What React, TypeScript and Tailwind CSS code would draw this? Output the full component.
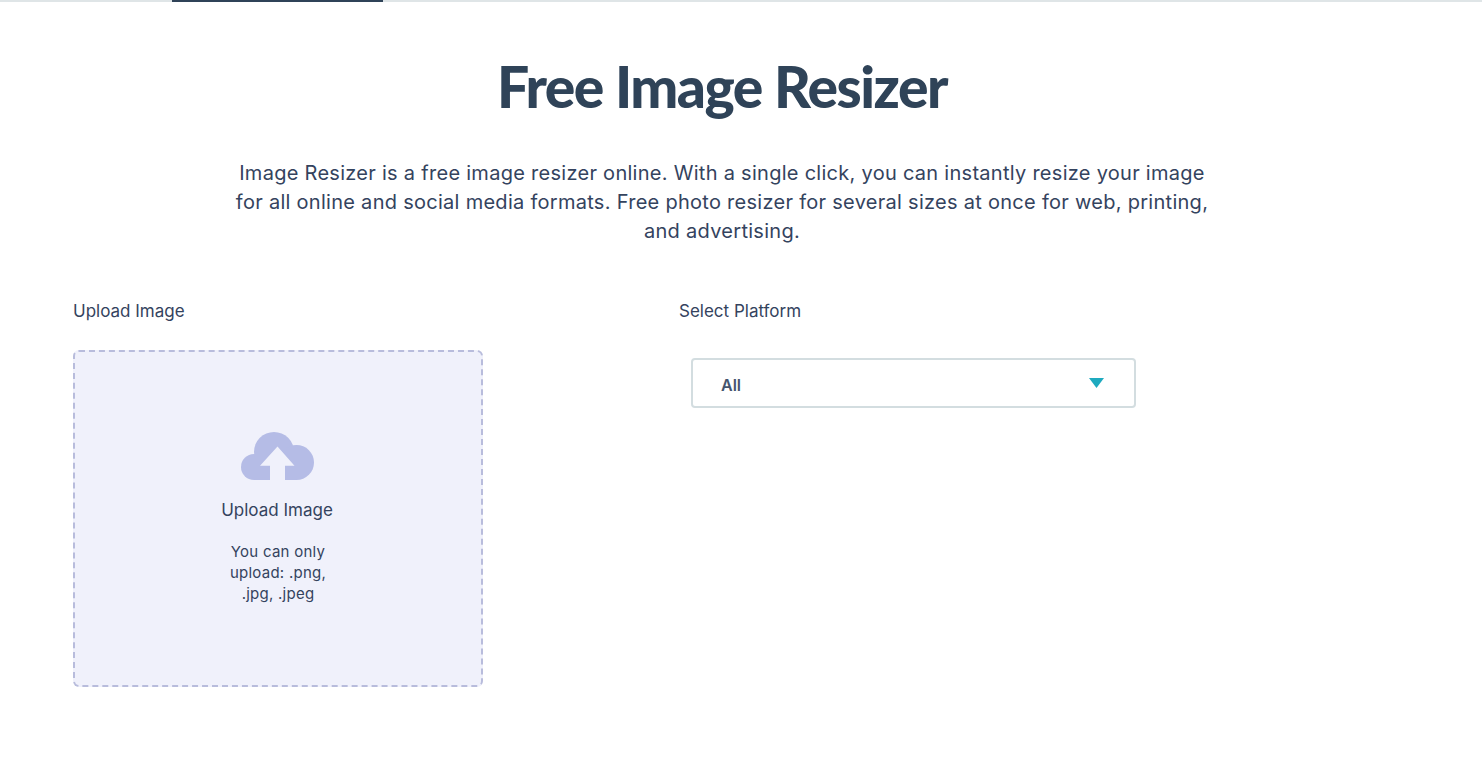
export default function App() {
  return (
    <div className="min-h-[760px] bg-white font-['Inter',sans-serif] text-[#34435e]">
      <div className="h-[2px] bg-[#dfe5e7] pl-[172px]">
        <div className="h-[2px] w-[211px] bg-[#2f4358]" />
      </div>

      <div className="pr-[38px]">
        <h1 className="mt-[50px] text-center font-['Lato',sans-serif] text-[57px] leading-[68px] font-black tracking-[-1.5px] text-[#2f4358]">
          Free Image Resizer
        </h1>

        <p className="mx-auto mt-[39px] w-[1000px] text-center text-[20px] leading-[29px] font-normal tracking-[0.28px] text-[#34435e]">
          Image Resizer is a free image resizer online. With a single click, you can instantly resize your image
          <br />
          for all online and social media formats. Free photo resizer for several sizes at once for web, printing,
          <br />
          and advertising.
        </p>
      </div>

      <div className="mt-[53px] flex pl-[73px]">
        <div className="w-[606px]">
          <div className="text-[17px] leading-[24px]">Upload Image</div>
          <div className="mt-[27px] flex h-[337px] w-[410px] flex-col items-center rounded-[6px] border-2 border-dashed border-[#b8bcdc] bg-[#f0f1fb] pt-[80px]">
            <svg width="73" height="48" viewBox="0 0 73 48" className="-ml-[2px]">
              <g fill="#b5bce6">
                <circle cx="13" cy="35" r="13" />
                <circle cx="33" cy="20" r="20" />
                <circle cx="55.5" cy="30.5" r="17.5" />
                <rect x="13" y="28" width="42.5" height="20" />
              </g>
              <path d="M36.5 14.5 53.5 33.7H44V48H29V33.7H19Z" fill="#f0f1fb" />
            </svg>
            <div className="mt-[18px] -ml-[2px] text-[17px] leading-[24px]">Upload Image</div>
            <div className="mt-[19px] w-[110px] text-center text-[15px] leading-[21px] tracking-[0.25px]">
              You can only upload: .png, .jpg, .jpeg
            </div>
          </div>
        </div>

        <div>
          <div className="text-[17px] leading-[24px]">Select Platform</div>
          <div className="mt-[35px] ml-[12px] flex h-[50px] w-[445px] items-center justify-between rounded-[4px] border-2 border-[#d3dde0] pr-[30px] pl-[28px]">
            <span className="mt-[3px] text-[16px] font-semibold text-[#45546e]">All</span>
            <svg width="15" height="10" viewBox="0 0 15 10">
              <path d="M0 0H15L7.5 10Z" fill="#1eaabf" />
            </svg>
          </div>
        </div>
      </div>
    </div>
  );
}
